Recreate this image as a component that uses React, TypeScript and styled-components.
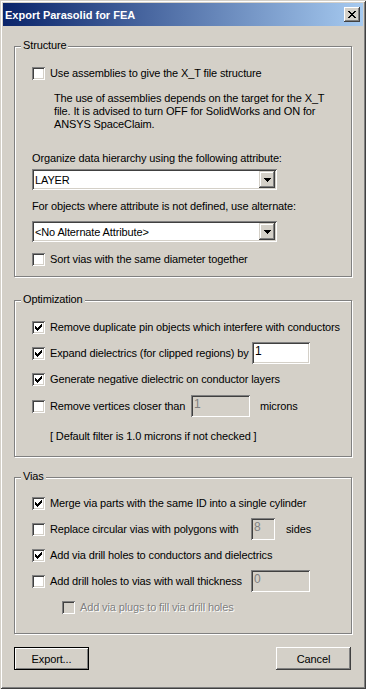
import React from "react";
import styled, { createGlobalStyle } from "styled-components";

const face = "#D4D0C8";

const GlobalStyle = createGlobalStyle`
  html, body {
    margin: 0;
    padding: 0;
    background: ${face};
  }
  body {
    font-family: "Liberation Sans", Arial, sans-serif;
    font-size: 11px;
    letter-spacing: -0.13px;
    color: #000;
  }
`;

const Window = styled.div`
  width: 366px;
  height: 689px;
  box-sizing: border-box;
  padding: 3px;
  background: ${face};
  box-shadow: inset 1px 1px 0 ${face}, inset -1px -1px 0 #404040,
    inset 2px 2px 0 #fff, inset -2px -2px 0 #808080;
  display: flex;
  flex-direction: column;
`;

const TitleBar = styled.div`
  height: 23px;
  flex-shrink: 0;
  background: linear-gradient(to right, #0a246a, #a6caf0);
  display: flex;
  align-items: center;
  justify-content: space-between;
  padding: 0 3px 0 2px;
  color: #fff;
  font-weight: bold;
  font-size: 11px;
  letter-spacing: 0;
`;

const CloseButton = styled.div`
  width: 16px;
  height: 15px;
  box-sizing: border-box;
  background: ${face};
  box-shadow: inset -1px -1px 0 #404040, inset 1px 1px 0 #fff,
    inset -2px -2px 0 #808080;
  display: flex;
  align-items: center;
  justify-content: center;
`;

const Body = styled.div`
  flex: 1;
  display: flex;
  flex-direction: column;
  padding: 20px 11px 0 11px;
`;

const Group = styled.div<{ $h: number; $mt?: number; $pt: number }>`
  position: relative;
  box-sizing: border-box;
  height: ${({ $h }) => $h}px;
  margin-top: ${({ $mt }) => $mt ?? 0}px;
  padding: ${({ $pt }) => $pt}px 0 0 17px;
  border: 1px solid #808080;
  box-shadow: inset 1px 1px 0 #fff, 1px 1px 0 #fff;
  display: flex;
  flex-direction: column;
`;

const Legend = styled.span`
  position: absolute;
  left: 6px;
  top: -9px;
  padding: 0 2px;
  line-height: 14px;
  background: ${face};
`;

const Row = styled.div<{ $h?: number; $indent?: number; $mt?: number }>`
  display: flex;
  align-items: center;
  height: ${({ $h }) => $h ?? 26}px;
  margin-top: ${({ $mt }) => $mt ?? 0}px;
  padding-left: ${({ $indent }) => $indent ?? 0}px;
  white-space: nowrap;
`;

const Box = styled.span<{ $disabled?: boolean }>`
  width: 13px;
  height: 13px;
  box-sizing: border-box;
  flex-shrink: 0;
  margin-right: 5px;
  background: ${({ $disabled }) => ($disabled ? face : "#fff")};
  box-shadow: inset 1px 1px 0 #808080, inset -1px -1px 0 #fff,
    inset 2px 2px 0 #404040, inset -2px -2px 0 ${face};
  display: flex;
  align-items: center;
  justify-content: center;
`;

const Label = styled.span<{ $w?: number; $disabled?: boolean }>`
  display: inline-block;
  width: ${({ $w }) => ($w ? `${$w}px` : "auto")};
  flex-shrink: 0;
  color: ${({ $disabled }) => ($disabled ? "#808080" : "#000")};
  text-shadow: ${({ $disabled }) => ($disabled ? "1px 1px 0 #fff" : "none")};
`;

const Unit = styled.span<{ $ml: number }>`
  margin-left: ${({ $ml }) => $ml}px;
`;

const Field = styled.div<{ $w: number; $disabled?: boolean }>`
  width: ${({ $w }) => $w}px;
  height: 22px;
  box-sizing: border-box;
  flex-shrink: 0;
  padding: 3px 3px 0 3px;
  line-height: 13px;
  font-size: 12px;
  background: ${({ $disabled }) => ($disabled ? face : "#fff")};
  color: ${({ $disabled }) => ($disabled ? "#808080" : "#000")};
  box-shadow: inset 1px 1px 0 #808080, inset -1px -1px 0 #fff,
    inset 2px 2px 0 #404040, inset -2px -2px 0 ${face};
`;

const Caption = styled.div<{ $mt: number; $ml?: number }>`
  margin-top: ${({ $mt }) => $mt}px;
  margin-left: ${({ $ml }) => $ml ?? 0}px;
  line-height: 13px;
  white-space: nowrap;
`;

const Select = styled.div<{ $mt: number }>`
  width: 245px;
  height: 21px;
  margin-top: ${({ $mt }) => $mt}px;
  box-sizing: border-box;
  padding: 2px;
  background: #fff;
  box-shadow: inset 1px 1px 0 #808080, inset -1px -1px 0 #fff,
    inset 2px 2px 0 #404040, inset -2px -2px 0 ${face};
  display: flex;
  align-items: center;
  justify-content: space-between;
`;

const SelectValue = styled.span`
  padding-left: 1px;
  white-space: nowrap;
`;

const ArrowButton = styled.span`
  width: 16px;
  height: 17px;
  box-sizing: border-box;
  background: ${face};
  box-shadow: inset -1px -1px 0 #404040, inset 1px 1px 0 ${face},
    inset -2px -2px 0 #808080, inset 2px 2px 0 #fff;
  display: flex;
  align-items: center;
  justify-content: center;
`;

const ButtonRow = styled.div`
  display: flex;
  justify-content: space-between;
  margin-top: 13px;
  padding-right: 1px;
`;

const Button = styled.div<{ $default?: boolean }>`
  width: 75px;
  height: 23px;
  box-sizing: border-box;
  display: flex;
  align-items: center;
  justify-content: center;
  background: ${face};
  border: ${({ $default }) => ($default ? "1px solid #000" : "none")};
  box-shadow: ${({ $default }) =>
    $default
      ? "inset 1px 1px 0 #fff, inset -1px -1px 0 #808080"
      : `inset -1px -1px 0 #404040, inset 1px 1px 0 #fff, inset -2px -2px 0 #808080`};
`;

const Check = () => (
  <svg width="7" height="7" viewBox="0 0 7 7" shapeRendering="crispEdges">
    <path
      fill="#000"
      d="M6 0h1v1h-1z M5 1h2v1h-2z M0 2h1v1h-1z M4 2h3v1h-3z M0 3h2v1h-2z M3 3h3v1h-3z M0 4h5v1h-5z M1 5h3v1h-3z M2 6h1v1h-1z"
    />
  </svg>
);

const Arrow = () => (
  <svg width="7" height="4" viewBox="0 0 7 4" shapeRendering="crispEdges">
    <path fill="#000" d="M0 0h7v1h-7z M1 1h5v1h-5z M2 2h3v1h-3z M3 3h1v1h-1z" />
  </svg>
);

const CloseGlyph = () => (
  <svg width="8" height="7" viewBox="0 0 8 7" shapeRendering="crispEdges">
    <path
      fill="#000"
      d="M0 0h2v1h-2z M6 0h2v1h-2z M1 1h2v1h-2z M5 1h2v1h-2z M2 2h4v1h-4z M3 3h2v1h-2z M2 4h4v1h-4z M1 5h2v1h-2z M5 5h2v1h-2z M0 6h2v1h-2z M6 6h2v1h-2z"
    />
  </svg>
);

const CheckRow = ({
  label,
  checked,
  disabled,
  h,
  indent,
  w,
  children,
}: {
  label: string;
  checked?: boolean;
  disabled?: boolean;
  h?: number;
  indent?: number;
  w?: number;
  children?: React.ReactNode;
}) => (
  <Row $h={h} $indent={indent}>
    <Box $disabled={disabled}>{checked && <Check />}</Box>
    <Label $w={w} $disabled={disabled}>
      {label}
    </Label>
    {children}
  </Row>
);

export default function App() {
  return (
    <>
      <GlobalStyle />
      <Window>
        <TitleBar>
          <span>Export Parasolid for FEA</span>
          <CloseButton>
            <CloseGlyph />
          </CloseButton>
        </TitleBar>
        <Body>
          <Group $h={231} $pt={13}>
            <Legend>Structure</Legend>
            <CheckRow label="Use assemblies to give the X_T file structure" />
            <Caption $mt={6} $ml={22}>
              The use of assemblies depends on the target for the X_T
              <br />
              file. It is advised to turn OFF for SolidWorks and ON for
              <br />
              ANSYS SpaceClaim.
            </Caption>
            <Caption $mt={21}>
              Organize data hierarchy using the following attribute:
            </Caption>
            <Select $mt={4}>
              <SelectValue>LAYER</SelectValue>
              <ArrowButton>
                <Arrow />
              </ArrowButton>
            </Select>
            <Caption $mt={10}>
              For objects where attribute is not defined, use alternate:
            </Caption>
            <Select $mt={8}>
              <SelectValue>&lt;No Alternate Attribute&gt;</SelectValue>
              <ArrowButton>
                <Arrow />
              </ArrowButton>
            </Select>
            <Row $mt={4}>
              <Box />
              <Label>Sort vias with the same diameter together</Label>
            </Row>
          </Group>

          <Group $h={157} $mt={23} $pt={13}>
            <Legend>Optimization</Legend>
            <CheckRow
              checked
              label="Remove duplicate pin objects which interfere with conductors"
            />
            <CheckRow
              checked
              w={202}
              label="Expand dielectrics (for clipped regions) by"
            >
              <Field $w={58}>1</Field>
            </CheckRow>
            <CheckRow checked label="Generate negative dielectric on conductor layers" />
            <CheckRow h={28} w={141} label="Remove vertices closer than">
              <Field $w={59} $disabled>
                1
              </Field>
              <Unit $ml={10}>microns</Unit>
            </CheckRow>
            <Caption $mt={10} $ml={18}>
              [ Default filter is 1.0 microns if not checked ]
            </Caption>
          </Group>

          <Group $h={157} $mt={20} $pt={12}>
            <Legend>Vias</Legend>
            <CheckRow
              checked
              label="Merge via parts with the same ID into a single cylinder"
            />
            <CheckRow w={201} label="Replace circular vias with polygons with">
              <Field $w={24} $disabled>
                8
              </Field>
              <Unit $ml={11}>sides</Unit>
            </CheckRow>
            <CheckRow checked label="Add via drill holes to conductors and dielectrics" />
            <CheckRow w={201} label="Add drill holes to vias with wall thickness">
              <Field $w={59} $disabled>
                0
              </Field>
            </CheckRow>
            <CheckRow
              disabled
              indent={30}
              label="Add via plugs to fill via drill holes"
            />
          </Group>

          <ButtonRow>
            <Button $default>Export...</Button>
            <Button>Cancel</Button>
          </ButtonRow>
        </Body>
      </Window>
    </>
  );
}
